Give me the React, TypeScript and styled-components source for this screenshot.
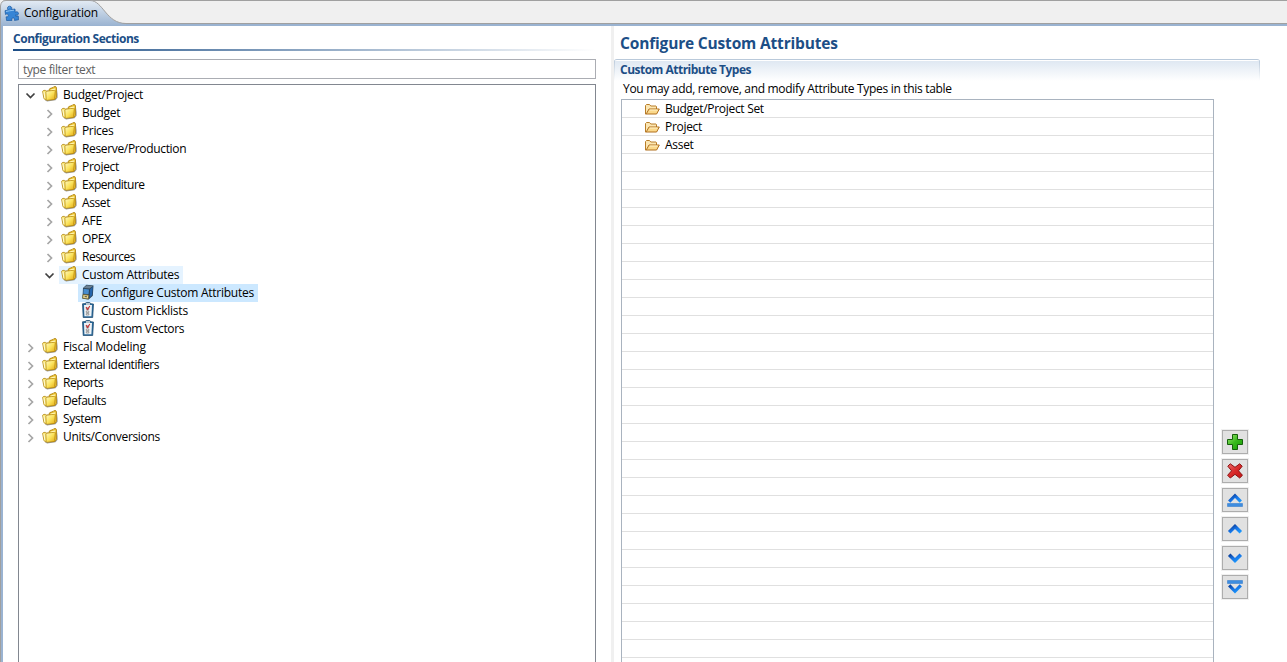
import React from 'react';
import styled, { createGlobalStyle } from 'styled-components';

const GlobalStyle = createGlobalStyle`
  * { box-sizing: border-box; }
  html, body { margin: 0; padding: 0; overflow: hidden; }
  body { background: #fff; color: #000; font: 12px/18px "Open Sans", "Noto Sans", sans-serif; }
`;

const Window = styled.div`
  height: 662px;
  display: flex;
  flex-direction: column;
  background: #fff;
`;
const TabBar = styled.header`
  height: 26px;
  flex: none;
  position: relative;
  display: flex;
  align-items: flex-start;
  background: #f0f0f0;
`;
const TabShape = styled.svg`
  position: absolute;
  left: 0;
  top: 0;
`;
const Tab = styled.div`
  position: relative;
  display: flex;
  align-items: center;
  gap: 4px;
  height: 24px;
  padding: 1px 0 0 4px;
`;
const Body = styled.main`
  flex: 1;
  min-height: 0;
  display: flex;
  border-left: 1px solid #a0a0a0;
  box-shadow: inset 2px 0 #9ab3d1;
`;
const Sections = styled.section`
  width: 610px;
  display: flex;
  flex-direction: column;
  padding: 4px 15px 0 12px;
`;
const Text = styled.span<{ $ls?: number }>`
  white-space: nowrap;
  letter-spacing: ${(p) => p.$ls ?? 0}px;
`;
const SectionTitle = styled.h2`
  margin: 0;
  height: 21px;
  font-size: 12px;
  line-height: 18px;
  color: #1c4e86;
  font-weight: 700;
  white-space: nowrap;
`;
const Rule = styled.div`
  height: 2px;
  flex: none;
  margin-top: -2px;
  background: linear-gradient(90deg, #1c4e86, #fff);
`;
const Filter = styled.div`
  height: 20px;
  flex: none;
  margin: 8px 0 5px 5px;
  padding: 0 4px;
  line-height: 19px;
  border: 1px solid #abadb3;
  color: #606060;
`;
const Tree = styled.div`
  flex: 1;
  margin-left: 5px;
  padding: 1px 0 0 4px;
  border: 1px solid #828790;
  border-bottom: 0;
`;
const TreeRow = styled.div<{ $level: number }>`
  display: flex;
  height: 18px;
  padding-left: ${(p) => p.$level * 19}px;
`;
const Twisty = styled.svg`
  flex: none;
  width: 17px;
  height: 18px;
`;
const Item = styled.div<{ $bg?: string }>`
  display: flex;
  height: 18px;
  gap: 5px;
  padding: 0 4px 0 2px;
  background: ${(p) => p.$bg ?? 'transparent'};
`;
const Icon = styled.svg`
  flex: none;
  width: 16px;
  height: 16px;
`;
const Sash = styled.div`
  width: 3px;
  background: #f0f0f0;
`;
const Details = styled.section`
  flex: 1;
  display: flex;
  flex-direction: column;
`;
const Heading = styled.h1`
  margin: 0;
  height: 33px;
  padding: 6px 0 0 6px;
  font-size: 15.5px;
  line-height: 23px;
  color: #1c4e86;
  white-space: nowrap;
`;
const GroupHeader = styled.div`
  width: 646px;
  height: 22px;
  padding: 1px 0 0 6px;
  border-top: 1px solid #b9c9da;
  border-radius: 3px 3px 0 0;
  background:
    linear-gradient(#b9c9da, #fff) 0 0 / 1px 100% no-repeat,
    linear-gradient(#b9c9da, #fff) 100% 0 / 1px 100% no-repeat,
    linear-gradient(#fff 0 1px, #dfe8f2 1px, #fff 100%);
`;
const Hint = styled.p`
  margin: 0;
  height: 18px;
  padding-left: 9px;
  line-height: 15px;
`;
const Group = styled.div`
  flex: 1;
  min-height: 0;
  display: flex;
  padding-left: 7px;
  gap: 8px;
`;
const Table = styled.div`
  width: 593px;
  border: 1px solid #a9b3bf;
  border-bottom: 0;
  overflow: hidden;
`;
const TableRow = styled.div`
  display: flex;
  gap: 5px;
  height: 18px;
  padding-left: 22px;
  border-bottom: 1px solid #e0e0e0;
`;
const Buttons = styled.div`
  display: flex;
  flex-direction: column;
  gap: 5px;
  padding-top: 331px;
`;
const ToolButton = styled.button`
  width: 26px;
  height: 24px;
  padding: 0;
  display: flex;
  align-items: center;
  justify-content: center;
  background: #e1e1e1;
  border: 1px solid #adadad;
  box-shadow: 0 0 0 1px #f0f0f0;
`;

const Defs = () => (
  <svg width="0" height="0" style={{ position: 'absolute' }} aria-hidden="true">
    <defs>
      <linearGradient id="gold" x2="1" y2="1">
        <stop offset="0" stopColor="#fffbc8" />
        <stop offset=".5" stopColor="#fbe35c" />
        <stop offset="1" stopColor="#e3a90f" />
      </linearGradient>
      <linearGradient id="blue" x2="1" y2="1">
        <stop offset="0" stopColor="#0a3f9c" />
        <stop offset=".5" stopColor="#1775e6" />
        <stop offset="1" stopColor="#1b9bff" />
      </linearGradient>
      <linearGradient id="green" x2="1" y2="1">
        <stop offset="0" stopColor="#a3e878" />
        <stop offset=".5" stopColor="#38b91c" />
        <stop offset="1" stopColor="#169b05" />
      </linearGradient>
      <linearGradient id="red" x2="1" y2="1">
        <stop offset="0" stopColor="#ee6a6a" />
        <stop offset=".5" stopColor="#d92a2a" />
        <stop offset="1" stopColor="#c01414" />
      </linearGradient>
      <linearGradient id="tab" x2="0" y2="1">
        <stop offset="0" stopColor="#e3ebf4" />
        <stop offset="1" stopColor="#9ab3d1" />
      </linearGradient>
    </defs>
  </svg>
);

const Folders = () => (
  <Icon viewBox="0 0 16 16">
    <path d="M2.500 13.800 5 15.400 13.500 14.300 15.600 11.800V3.500l-1 8-1.600 1.700z" fill="#555" opacity=".6" />
    <path d="M.6 5.300 1.400 4.500 3.300 4.300 4 5.200 6 5v8.500L3.200 13.800 1.900 12.300z" fill="#fbe977" stroke="#b08410" strokeWidth=".8" />
    <path d="M1.900 6 2.900 12" stroke="#fffde4" strokeWidth=".9" />
    <path d="M7 4 7.800 2.600 11 1.500l.8-.8 2-.1.700 1.200v9.500L12.800 13.500 6 13.500z" fill="#e9bf2f" stroke="#a97c0c" strokeWidth=".8" />
    <path d="M3.900 5.800 4.800 5.200 12.600 4.200 13.300 4.700 12.600 12.700 11.900 13.600 4.900 14.300 4.200 13.500z" fill="url(#gold)" stroke="#b08410" strokeWidth=".7" />
    <path d="M8.600 3.400 13.300 2.300v1.400L8.600 4.300z" fill="#fff7b5" />
  </Icon>
);
const OpenFolder = () => (
  <Icon viewBox="0 0 16 16">
    <path d="M1.500 14V5.500l1-1h3l1.300 1.500h5.200l.5.500V9" fill="#fbe6b2" stroke="#b87d28" />
    <path d="M2.500 13.500 5 9h10.300L12.600 14H1.700z" fill="#fbd98b" stroke="#b06f1c" />
    <path d="M5.600 10h8" stroke="#fff1c9" />
  </Icon>
);
const Cabinet = () => (
  <Icon viewBox="0 0 16 16">
    <path d="M3 4 6.500.8 13.500 1.500 12.800 11.800 8.700 15.500 2.500 14.500z" fill="#2b4052" />
    <path d="M3.600 3.900 6.800 1.300l6 .6L9.700 4.500z" fill="#6c8294" />
    <path d="M3.500 4.800 9 5.400 8.600 10.300 3.300 9.700z" fill="#478ccd" />
    <path d="m10 5.200 2.800-2.600-.6 8.500L9.400 14z" fill="#2464ab" />
    <path d="m3 10.500 5.800.6-.5 3.900-5.700-.7z" fill="#e5d38c" stroke="#665a31" strokeWidth=".8" />
    <path d="M4.700 12.500 7 12.800" stroke="#555" />
  </Icon>
);
const Checklist = () => (
  <Icon viewBox="0 0 16 16">
    <path d="M2.500 1.800 5 1.500 6.500.5h3L11 1.700l2.500.3-.8 13.500H3.200z" fill="#2a6a9b" stroke="#174468" strokeWidth=".7" />
    <path d="M4 3h8l-.6 11.200H4.400z" fill="#f0f4f7" />
    <path d="M6 1h4v2H6z" fill="#b7c5cf" />
    <path d="M6.300 9h2.500v1.600H6.300zm0 2.600h2.500v1.400H6.300z" fill="#fff" stroke="#777" strokeWidth=".7" />
    <path d="M6.300 5.800h2.500v1.800H6.300z" fill="none" stroke="#777" strokeWidth=".6" />
    <path d="m6 5 1.600 2.500L9.800 4" fill="none" stroke="#c62d31" strokeWidth="1.100" />
  </Icon>
);
const Puzzle = () => (
  <Icon viewBox="0 0 16 16">
    <path d="M1 5.700 4.200 5C2.700 3.200 3.700 1.200 5.600 1.200s2.800 1.800 1.800 3.300L11 4l.2 3.300c1.500-1.200 3.400-.2 3.300 1.300s-1.800 2-2.900 1.300l.2 1.400 2.500-.3.2 3.800-4 .6c.3-1.800-.4-2.600-1.500-2.500s-1.600 1-1 2.500l-5.400.1-.5-3.700c1.600.4 2.400-.4 2.200-1.600S2.900 8.700 1.500 9.500z" fill="#3685d6" stroke="#19569e" strokeWidth=".7" />
    <path d="M4.600 3 5.500 2.200M2 6.500 5.500 5.800 10 5.200" stroke="#8fc4f2" fill="none" />
  </Icon>
);

const buttonArt: Record<string, React.ReactNode> = {
  Add: <path d="M5.500.5h5v5h5v5h-5v5h-5v-5h-5v-5h5z" fill="url(#green)" stroke="#145f0b" />,
  Remove: <path d="M3.300.8 8 4.300 12.700.8l2.500 2.400-3.700 4.600 4 4.500-2.800 2.700L8 11.300 3.300 15 .6 12.300l4-4.500L.8 3.200z" fill="url(#red)" stroke="#8b1212" />,
  Top: (
    <>
      <path d="M2.200 9.700 8 3.700l5.800 6" fill="none" stroke="url(#blue)" strokeWidth="3.200" />
      <path d="M.5 11.500h15v3H.5z" fill="#3d8de0" stroke="#2873c6" strokeWidth=".5" />
    </>
  ),
  Up: <path d="M2.200 11.200 8 5.500l5.800 5.700" fill="none" stroke="url(#blue)" strokeWidth="3.600" />,
  Down: <path d="M2.200 4.800 8 10.500l5.800-5.700" fill="none" stroke="url(#blue)" strokeWidth="3.600" />,
  Bottom: (
    <>
      <path d="M2.200 6.300 8 12.300l5.800-6" fill="none" stroke="url(#blue)" strokeWidth="3.200" />
      <path d="M.5 1.500h15v3H.5z" fill="#3d8de0" stroke="#2873c6" strokeWidth=".5" />
    </>
  ),
};

type Node = { label: string; level: number; ls: number; open?: boolean; leaf?: 'cabinet' | 'list'; bg?: string };
const nodes: Node[] = [
  { label: 'Budget/Project', level: 0, ls: -0.24, open: true },
  { label: 'Budget', level: 1, ls: -0.3 },
  { label: 'Prices', level: 1, ls: -0.35 },
  { label: 'Reserve/Production', level: 1, ls: -0.34 },
  { label: 'Project', level: 1, ls: -0.3 },
  { label: 'Expenditure', level: 1, ls: -0.5 },
  { label: 'Asset', level: 1, ls: -0.4 },
  { label: 'AFE', level: 1, ls: -0.1 },
  { label: 'OPEX', level: 1, ls: -0.35 },
  { label: 'Resources', level: 1, ls: -0.5 },
  { label: 'Custom Attributes', level: 1, ls: -0.27, open: true, bg: '#e5f3ff' },
  { label: 'Configure Custom Attributes', level: 2, ls: -0.25, leaf: 'cabinet', bg: '#cce8ff' },
  { label: 'Custom Picklists', level: 2, ls: -0.22, leaf: 'list' },
  { label: 'Custom Vectors', level: 2, ls: -0.36, leaf: 'list' },
  { label: 'Fiscal Modeling', level: 0, ls: -0.18 },
  { label: 'External Identifiers', level: 0, ls: -0.48 },
  { label: 'Reports', level: 0, ls: -0.5 },
  { label: 'Defaults', level: 0, ls: -0.45 },
  { label: 'System', level: 0, ls: -0.35 },
  { label: 'Units/Conversions', level: 0, ls: -0.32 },
];

const TreeNode = ({ node }: { node: Node }) => (
  <TreeRow $level={node.level}>
    <Twisty viewBox="0 0 17 18">
      {!node.leaf &&
        (node.open ? (
          <path d="m3.500 7.500 4 4 4-4" fill="none" stroke="#404040" strokeWidth="1.700" />
        ) : (
          <path d="m5.500 6 4 4-4 4" fill="none" stroke="#a6a6a6" strokeWidth="1.700" />
        ))}
    </Twisty>
    <Item $bg={node.bg}>
      {node.leaf === 'cabinet' ? <Cabinet /> : node.leaf === 'list' ? <Checklist /> : <Folders />}
      <Text $ls={node.ls}>{node.label}</Text>
    </Item>
  </TreeRow>
);

const tableRows = ['Budget/Project Set', 'Project', 'Asset', ...Array<string>(29).fill('')];

export default function App() {
  return (
    <Window>
      <GlobalStyle />
      <Defs />
      <TabBar>
        <TabShape width="1287" height="26">
          <path d="M0 .5h1287" stroke="#a0a0a0" />
          <path d="M0 23.500H1287" stroke="#a0a0a0" />
          <path d="M0 25H1287" stroke="#9ab3d1" strokeWidth="2" />
          <path d="M0 0H6Q.5 .5 0 6z" fill="#f0f0f0" />
          <path d="M.5 26V6Q1 .5 6 .5H90C103 .5 106 23.500 126 23.500V26H.5z" fill="url(#tab)" />
          <path d="M.5 26V6Q1 .5 6 .5H90C103 .5 106 23.500 126 23.500" fill="none" stroke="#a0a0a0" />
        </TabShape>
        <Tab>
          <Puzzle />
          <Text $ls={-0.2}>Configuration</Text>
        </Tab>
      </TabBar>
      <Body>
        <Sections>
          <SectionTitle><Text $ls={-0.46}>Configuration Sections</Text></SectionTitle>
          <Rule />
          <Filter><Text $ls={-0.37}>type filter text</Text></Filter>
          <Tree>
            {nodes.map((node) => <TreeNode key={node.label + node.level} node={node} />)}
          </Tree>
        </Sections>
        <Sash />
        <Details>
          <Heading><Text $ls={-0.17}>Configure Custom Attributes</Text></Heading>
          <GroupHeader>
            <SectionTitle><Text $ls={-0.51}>Custom Attribute Types</Text></SectionTitle>
          </GroupHeader>
          <Hint><Text $ls={-0.31}>You may add, remove, and modify Attribute Types in this table</Text></Hint>
          <Group>
            <Table>
              {tableRows.map((label, i) => (
                <TableRow key={i}>
                  {label && <><OpenFolder /><Text $ls={-0.3}>{label}</Text></>}
                </TableRow>
              ))}
            </Table>
            <Buttons>
              {Object.entries(buttonArt).map(([name, art]) => (
                <ToolButton key={name} aria-label={name}>
                  <Icon viewBox="0 0 16 16">{art}</Icon>
                </ToolButton>
              ))}
            </Buttons>
          </Group>
        </Details>
      </Body>
    </Window>
  );
}
